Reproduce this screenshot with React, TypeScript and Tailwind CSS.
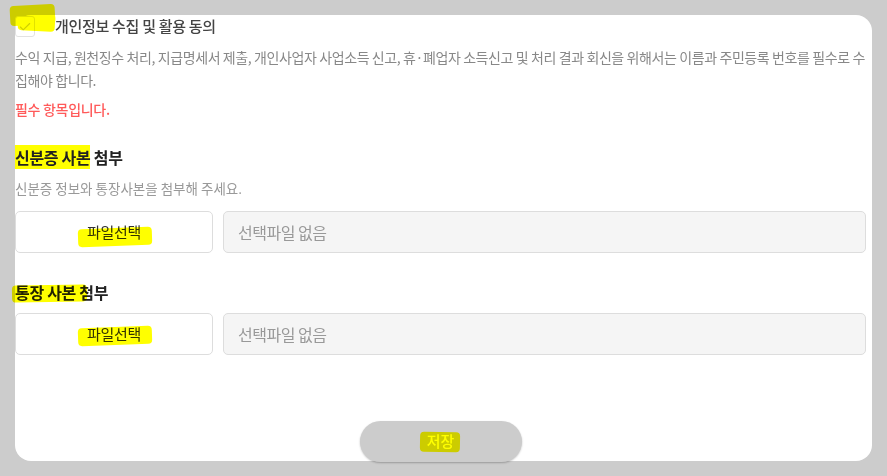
import { Check } from 'lucide-react';

function Marker({ className }: { className: string }) {
  return <span className={`pointer-events-none absolute bg-[#ffff00] mix-blend-multiply ${className}`} />;
}

function FileRow() {
  return (
    <div className="flex h-[42px] gap-[10px]">
      <button className="w-[198px] rounded-[5px] border border-[#dddddd] bg-white text-[15px] tracking-[-0.3px] text-[#333333]">
        파일선택
      </button>
      <div className="flex flex-1 items-center rounded-[5px] border border-[#dddddd] bg-[#f5f5f5] pl-[14px] text-[16px] tracking-[-0.5px] text-[#999999]">
        선택파일 없음
      </div>
    </div>
  );
}

export default function App() {
  return (
    <div className="h-screen w-full overflow-hidden bg-[#cccccc] p-[15px] font-['Noto_Sans_CJK_KR','Noto_Sans',sans-serif]">
      <div className="relative flex h-full flex-col rounded-2xl bg-white pr-[6px]">
        <div className="mt-px flex h-[21px] items-center">
          <span className="flex h-[21px] w-[20px] items-center justify-center rounded-[3px] border border-[#e2e2e2] bg-white">
            <Check size={14} strokeWidth={2} className="text-[#d0d0d0]" />
          </span>
          <span className="ml-[20px] text-[15px] font-medium tracking-[-0.3px] text-[#444444]">
            개인정보 수집 및 활용 동의
          </span>
        </div>

        <p className="mt-[9px] break-all text-[14px] leading-[23px] tracking-[-0.4px] text-[#888888]">
          수익 지급, 원천징수 처리, 지급명세서 제출, 개인사업자 사업소득 신고, 휴·폐업자 소득신고 및 처리 결과 회신을 위해서는 이름과 주민등록 번호를 필수로 수집해야 합니다.
        </p>
        <p className="mt-[6px] text-[14px] font-medium leading-[23px] tracking-[-0.3px] text-[#ff5a5a]">필수 항목입니다.</p>

        <h3 className="mt-[24px] text-[16px] font-bold leading-[24px] tracking-[-0.3px] text-[#222222]">
          <span className="bg-[#ffff00]">신분증 사본</span> 첨부
        </h3>
        <p className="mt-[9px] text-[13.5px] leading-[20px] text-[#999999]">신분증 정보와 통장사본을 첨부해 주세요.</p>
        <div className="mt-[13px]">
          <FileRow />
        </div>

        <h3 className="mt-[27px] text-[16px] font-bold leading-[24px] tracking-[-0.3px] text-[#222222]">통장 사본 첨부</h3>
        <div className="mt-[9px]">
          <FileRow />
        </div>

        <div className="mt-[66px] flex justify-center">
          <button className="h-[41px] w-[162px] rounded-full bg-[#cccccc] text-[15px] font-medium text-white shadow-[0_1px_2px_rgba(0,0,0,0.25)]">
            저장
          </button>
        </div>

        {/* highlighter marks from the screenshot */}
        <Marker className="-left-[5px] -top-[10px] h-[20px] w-[45px] -rotate-3 rounded-sm" />
        <Marker className="left-[3px] -top-[2px] h-[18px] w-[37px] rotate-3 rounded-sm" />
        <Marker className="left-[63px] top-[213px] h-[18px] w-[74px] -rotate-2 rounded-sm" />
        <Marker className="-left-[3px] top-[270px] h-[17px] w-[75px] -rotate-1 rounded-sm" />
        <Marker className="left-[63px] top-[312px] h-[18px] w-[74px] -rotate-2 rounded-sm" />
        <Marker className="left-[405px] top-[417px] h-[20px] w-[40px] rotate-1 rounded-sm" />
      </div>
    </div>
  );
}
